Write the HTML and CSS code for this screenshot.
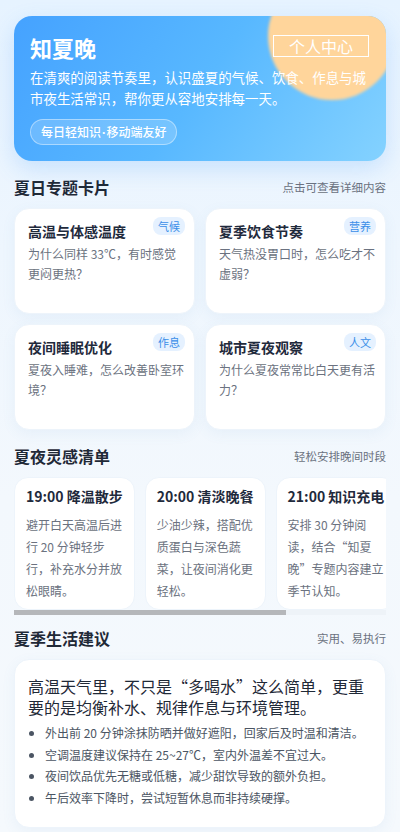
FILE: index.html
```html
<!DOCTYPE html>
<html lang="zh-CN">
<head>
<meta charset="utf-8">
<meta name="viewport" content="width=device-width, initial-scale=1">
<title>知夏晚</title>
<link rel="stylesheet" href="styles.css">
</head>
<body>
<main class="page">
  <header class="hero">
    <div class="hero-sun"></div>
    <button class="hero-btn" type="button">个人中心</button>
    <div class="hero-body">
      <h1 class="hero-title">知夏晚</h1>
      <p class="hero-desc">在清爽的阅读节奏里，认识盛夏的气候、饮食、作息与城市夜生活常识，帮你更从容地安排每一天。</p>
      <span class="hero-pill">每日轻知识<span class="dot">·</span>移动端友好</span>
    </div>
  </header>

  <section class="section">
    <div class="sec-head">
      <h2 class="sec-title">夏日专题卡片</h2>
      <span class="sec-note">点击可查看详细内容</span>
    </div>
    <div class="topic-grid">
      <article class="topic">
        <span class="tag">气候</span>
        <h3 class="topic-title">高温与体感温度</h3>
        <p class="topic-desc">为什么同样 33℃，有时感觉更闷更热？</p>
      </article>
      <article class="topic">
        <span class="tag">营养</span>
        <h3 class="topic-title">夏季饮食节奏</h3>
        <p class="topic-desc">天气热没胃口时，怎么吃才不虚弱？</p>
      </article>
      <article class="topic">
        <span class="tag">作息</span>
        <h3 class="topic-title">夜间睡眠优化</h3>
        <p class="topic-desc">夏夜入睡难，怎么改善卧室环境？</p>
      </article>
      <article class="topic">
        <span class="tag">人文</span>
        <h3 class="topic-title">城市夏夜观察</h3>
        <p class="topic-desc">为什么夏夜常常比白天更有活力？</p>
      </article>
    </div>
  </section>

  <section class="section">
    <div class="sec-head">
      <h2 class="sec-title">夏夜灵感清单</h2>
      <span class="sec-note">轻松安排晚间时段</span>
    </div>
    <div class="plan-scroll">
      <article class="plan">
        <h3 class="plan-title">19:00 降温散步</h3>
        <p class="plan-desc">避开白天高温后进行 20 分钟轻步行，补充水分并放松眼睛。</p>
      </article>
      <article class="plan">
        <h3 class="plan-title">20:00 清淡晚餐</h3>
        <p class="plan-desc">少油少辣，搭配优质蛋白与深色蔬菜，让夜间消化更轻松。</p>
      </article>
      <article class="plan">
        <h3 class="plan-title">21:00 知识充电</h3>
        <p class="plan-desc">安排 30 分钟阅读，结合“知夏晚”专题内容建立季节认知。</p>
      </article>
      <article class="plan">
        <h3 class="plan-title">22:00 安心入眠</h3>
        <p class="plan-desc">调暗灯光、放下手机，保持卧室通风凉爽，早些休息。</p>
      </article>
    </div>
    <div class="plan-bar"><div class="plan-thumb" style="width: 73%"></div></div>
  </section>

  <section class="section section-last">
    <div class="sec-head">
      <h2 class="sec-title">夏季生活建议</h2>
      <span class="sec-note">实用、易执行</span>
    </div>
    <div class="tips">
      <p class="tips-lead">高温天气里，不只是“多喝水”这么简单，更重要的是均衡补水、规律作息与环境管理。</p>
      <ul class="tips-list">
        <li>外出前 20 分钟涂抹防晒并做好遮阳，回家后及时温和清洁。</li>
        <li>空调温度建议保持在 25~27℃，室内外温差不宜过大。</li>
        <li>夜间饮品优先无糖或低糖，减少甜饮导致的额外负担。</li>
        <li>午后效率下降时，尝试短暂休息而非持续硬撑。</li>
      </ul>
    </div>
  </section>
</main>
</body>
</html>
```

FILE: styles.css
```css
* { box-sizing: border-box; }

html, body {
  margin: 0;
  padding: 0;
}

body {
  font-family: "Noto Sans CJK SC", "Noto Sans", sans-serif;
  background: linear-gradient(180deg, #e6f3ff 0%, #eef6fe 30%, #f3f8fd 60%, #f5f9fd 100%);
  color: #1f2937;
  min-height: 832px;
}

h1, h2, h3, p, ul { margin: 0; }

.page {
  padding: 16px 14px 4px;
}

/* Hero */
.hero {
  position: relative;
  overflow: hidden;
  height: 145px;
  border-radius: 18px;
  background: linear-gradient(125deg, #45a2ff 0%, #58b8ff 50%, #84d2ff 100%);
  box-shadow: 0 8px 22px rgba(72, 160, 250, 0.22);
  color: #fff;
}

.hero-sun {
  position: absolute;
  top: -44px;
  right: -10px;
  width: 128px;
  height: 128px;
  border-radius: 50%;
  background: #ffd59b;
  filter: blur(1.5px);
}

.hero-btn {
  position: absolute;
  top: 19px;
  right: 17px;
  z-index: 2;
  height: 22px;
  padding: 0 15px;
  border: 1px solid #fff;
  background: transparent;
  color: #fff;
  font-family: "Noto Sans CJK SC", sans-serif;
  font-size: 16px;
  line-height: 20px;
}

.hero-body {
  position: relative;
  z-index: 1;
  padding: 16px 16px 0;
}

.hero-title {
  font-size: 22px;
  line-height: 30px;
  font-weight: 700;
}

.hero-desc {
  margin-top: 5px;
  font-size: 13.44px;
  line-height: 21px;
  color: #fff;
}

.hero-pill {
  display: inline-block;
  margin-top: 10px;
  height: 26px;
  padding: 0 10px;
  border-radius: 13px;
  border: 1px solid rgba(255, 255, 255, 0.42);
  background: rgba(255, 255, 255, 0.18);
  font-size: 12px;
  line-height: 24px;
  font-weight: 500;
}

.dot {
  font-family: "Noto Sans", sans-serif;
  font-weight: 700;
  padding: 0 1px;
}

/* Sections */
.section {
  margin-top: 14px;
}

.sec-head {
  display: flex;
  justify-content: space-between;
  align-items: center;
  height: 24px;
  margin-bottom: 9px;
}

.sec-title {
  font-size: 16px;
  font-weight: 700;
  color: #1f2937;
}

.sec-note {
  font-size: 11.5px;
  color: #6b7280;
}

/* Topic cards */
.topic-grid {
  display: grid;
  grid-template-columns: 1fr 1fr;
  gap: 10px;
}

.topic {
  position: relative;
  min-height: 106px;
  padding: 12px 10px 12px 13px;
  background: #fff;
  border: 1px solid #edf4fb;
  border-radius: 15px;
  box-shadow: 0 4px 14px rgba(90, 140, 200, 0.07);
}

.tag {
  position: absolute;
  top: 8px;
  right: 9px;
  width: 32px;
  height: 18px;
  border-radius: 8px;
  background: #e5f1ff;
  color: #3a8ee8;
  font-size: 11px;
  line-height: 18px;
  text-align: center;
}

.topic-title {
  font-size: 14px;
  line-height: 20px;
  font-weight: 700;
  color: #1f2a3c;
}

.topic-desc {
  margin-top: 3px;
  font-size: 12px;
  line-height: 20px;
  color: #6b7280;
}

/* Plan scroller */
.plan-scroll {
  display: flex;
  gap: 10px;
  overflow-x: auto;
  scrollbar-width: none;
}

.plan-scroll::-webkit-scrollbar {
  display: none;
}

.plan {
  flex: 0 0 120px;
  height: 133px;
  padding: 8px 11px 7px;
  background: #fff;
  border: 1px solid #edf4fb;
  border-radius: 14px;
}

.plan-title {
  font-size: 14px;
  line-height: 20px;
  font-weight: 700;
  color: #1f2a3c;
  white-space: nowrap;
}

.plan-desc {
  margin-top: 8px;
  font-size: 12px;
  line-height: 22px;
  color: #6b7280;
}

.plan-bar {
  height: 5px;
  background: #eef3f8;
}

.plan-thumb {
  height: 100%;
  background: #b5b7ba;
}

/* Tips */
.section-last {
  margin-top: 11px;
}

.tips {
  padding: 16px 13px 19px;
  background: #fff;
  border: 1px solid #edf4fb;
  border-radius: 15px;
  box-shadow: 0 4px 14px rgba(90, 140, 200, 0.07);
}

.tips-lead {
  font-size: 16px;
  line-height: 21px;
  color: #1f2937;
}

.tips-list {
  margin-top: 4px;
  padding-left: 17px;
  font-size: 12px;
  line-height: 21.5px;
  color: #4b5563;
}
```
